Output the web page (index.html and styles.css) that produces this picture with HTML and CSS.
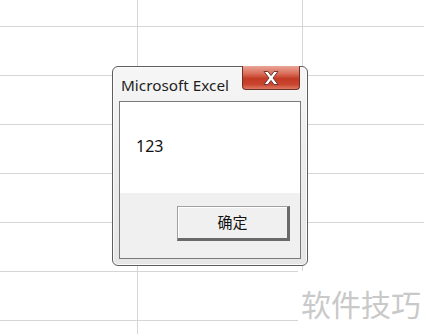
FILE: index.html
```html
<!DOCTYPE html>
<html>
<head>
<meta charset="utf-8">
<link rel="stylesheet" href="styles.css">
</head>
<body>
<div class="sheet"></div>
<div class="dialog">
  <div class="titlebar">
    <span class="title">Microsoft Excel</span>
    <div class="close">
      <svg width="22" height="16" viewBox="0 0 22 16">
        <path d="M4 1.5 L8 1.5 L11 5.5 L14 1.5 L18 1.5 L13 8 L18 14.5 L14 14.5 L11 10.5 L8 14.5 L4 14.5 L9 8 Z" fill="#ffffff" stroke="#6a3a34" stroke-width="1" stroke-linejoin="round"/>
      </svg>
    </div>
  </div>
  <div class="client">
    <div class="message">123</div>
    <div class="footer">
      <button class="ok">确定</button>
    </div>
  </div>
</div>
<div class="watermark">软件技巧</div>
</body>
</html>
```

FILE: styles.css
```css
html, body {
  margin: 0;
  padding: 0;
}
body {
  width: 424px;
  height: 334px;
  overflow: hidden;
  position: relative;
  background: #ffffff;
  font-family: "Noto Sans", "Noto Sans CJK SC", sans-serif;
}
.sheet {
  width: 424px;
  height: 334px;
  background-image:
    linear-gradient(to right, transparent 137px, #d6d6d6 137px, #d6d6d6 138px, transparent 138px, transparent 302px, #d6d6d6 302px, #d6d6d6 303px, transparent 303px),
    repeating-linear-gradient(to bottom, transparent 0, transparent 26px, #d6d6d6 26px, #d6d6d6 27px, transparent 27px, transparent 49px);
}
.dialog {
  position: absolute;
  left: 112px;
  top: 66px;
  width: 196px;
  height: 200px;
  box-sizing: border-box;
  border: 1px solid #5e5e5e;
  border-radius: 6px;
  background: linear-gradient(to bottom, #f6f6f6 0%, #ececec 50%, #e6e6e6 100%);
  box-shadow: inset 0 0 0 1px #fbfbfb;
  display: flex;
  flex-direction: column;
  padding: 0 6px 6px 6px;
}
.titlebar {
  height: 34px;
  flex: none;
  display: flex;
  align-items: center;
  position: relative;
}
.title {
  font-family: "Noto Sans", sans-serif;
  font-size: 15.3px;
  color: #1e1e1e;
  padding-left: 2px;
  padding-top: 2px;
}
.close {
  position: absolute;
  right: 1px;
  top: -1px;
  width: 58px;
  height: 24px;
  box-sizing: border-box;
  border: 1px solid #6e3128;
  border-top: none;
  border-radius: 0 0 4px 4px;
  background: linear-gradient(to bottom, #e9a598 0%, #d96a55 35%, #c23b24 55%, #c9442e 80%, #de7a62 100%);
  display: flex;
  align-items: center;
  justify-content: center;
}
.close svg {
  display: block;
}
.client {
  flex: 1;
  border: 1px solid #7a7a7a;
  display: flex;
  flex-direction: column;
  background: #f0f0f0;
}
.message {
  height: 91px;
  flex: none;
  background: #ffffff;
  box-sizing: border-box;
  padding: 34px 0 0 16px;
  font-family: "Noto Sans", sans-serif;
  font-size: 16px;
  color: #111;
  line-height: 20px;
}
.footer {
  flex: 1;
  display: flex;
  justify-content: flex-end;
  align-items: flex-start;
  padding: 13px 10px 0 0;
}
.ok {
  width: 113px;
  height: 35px;
  box-sizing: border-box;
  margin: 0;
  padding: 0 0 2px 0;
  background: #f0f0f0;
  border-style: solid;
  border-width: 1px 3px 3px 1px;
  border-color: #a0a0a0 #6a6a6a #6a6a6a #a0a0a0;
  box-shadow: inset 1px 1px 0 #ffffff;
  font-family: "Noto Sans CJK SC", sans-serif;
  font-size: 15px;
  color: #111;
  line-height: 1;
}
.watermark {
  position: absolute;
  left: 298px;
  top: 271px;
  width: 126px;
  height: 63px;
  background: #ffffff;
  display: flex;
  align-items: center;
  justify-content: flex-start;
  padding-left: 3px;
  box-sizing: border-box;
  font-family: "Noto Sans CJK SC", sans-serif;
  font-size: 30px;
  color: #c9c9c9;
}
```
